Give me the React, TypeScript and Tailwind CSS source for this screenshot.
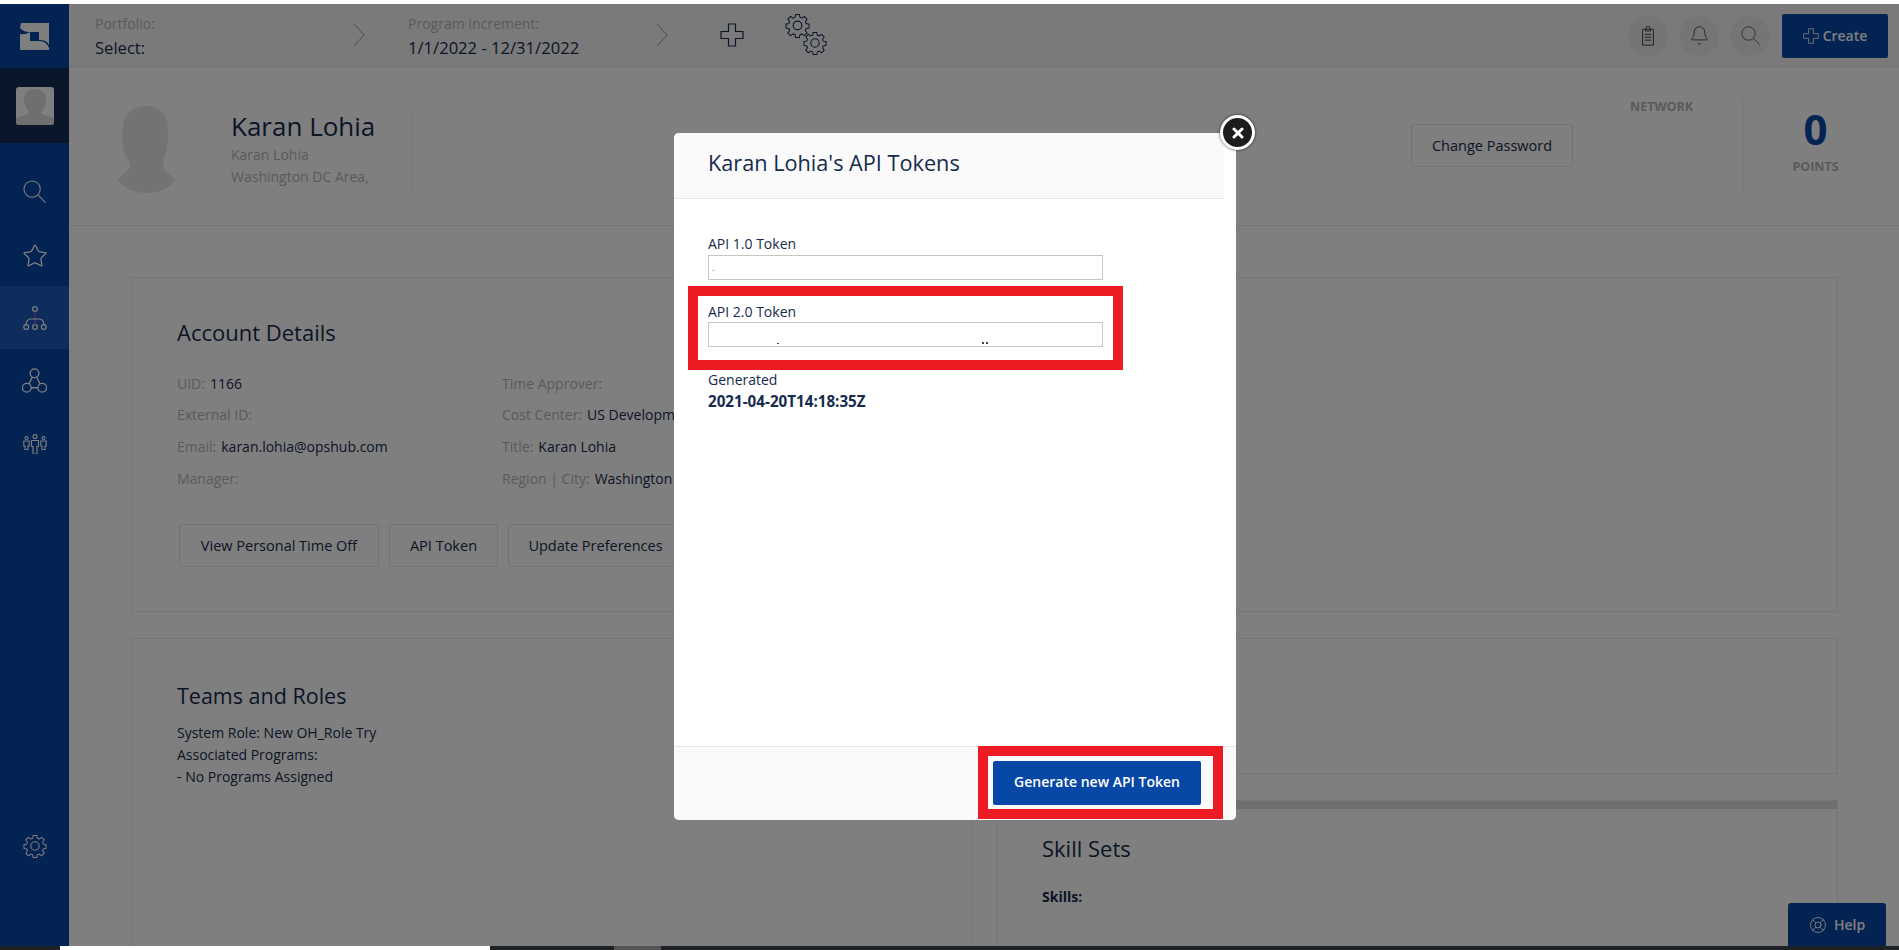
import React from 'react';
import { Star, Bell, LifeBuoy } from 'lucide-react';

function SearchIcon({ className }: { className?: string }) {
  return (
    <svg viewBox="0 0 24 24" fill="none" stroke="currentColor" strokeWidth="1.1" className={className}>
      <circle cx="9.5" cy="9.5" r="8.5" />
      <path d="M15.6 15.6 23.5 23.5" />
    </svg>
  );
}

function GearIcon({ className }: { className?: string }) {
  return (
    <svg viewBox="0 0 24 24" fill="none" stroke="currentColor" strokeWidth="1.1" className={className}>
      <circle cx="12" cy="12" r="4.2" />
      <path d="M10 1h4l.6 3.1 2 .8 2.6-1.8 2.8 2.8-1.8 2.6.8 2 3 .6v4l-3 .6-.8 2 1.8 2.6-2.8 2.8-2.6-1.8-2 .8-.6 3h-4l-.6-3-2-.8-2.6 1.8-2.8-2.8 1.8-2.6-.8-2-3-.6v-4l3-.6.8-2L2 5.9l2.8-2.8 2.6 1.8 2-.8z" transform="translate(12 12) scale(.92) translate(-12 -12.5)" />
    </svg>
  );
}

function PlusOutline({ className }: { className?: string }) {
  return (
    <svg viewBox="0 0 24 24" fill="none" stroke="currentColor" strokeWidth="1.2" className={className}>
      <path d="M8.5 1h7v7.5H23v7h-7.5V23h-7v-7.5H1v-7h7.5z" />
    </svg>
  );
}

function Chevron() {
  return (
    <svg viewBox="0 0 12 24" fill="none" stroke="#9a9a9a" strokeWidth="1" className="w-[12px] h-[24px] shrink-0">
      <path d="M1 1l10 11L1 23" />
    </svg>
  );
}

function Hierarchy({ className }: { className?: string }) {
  return (
    <svg viewBox="0 0 24 24" fill="none" stroke="currentColor" strokeWidth="1.2" className={className}>
      <circle cx="12" cy="3" r="2.4" />
      <circle cx="3.2" cy="21" r="2.4" />
      <circle cx="12" cy="21" r="2.4" />
      <circle cx="20.8" cy="21" r="2.4" />
      <path d="M12 5.4v13.2" stroke="#c050e0" />
      <path d="M3.2 18.6c0-4 2-5.6 5-5.6h7.600c3 0 5 1.600 5 5.600" />
    </svg>
  );
}

function Triad({ className }: { className?: string }) {
  return (
    <svg viewBox="0 0 24 24" fill="none" stroke="currentColor" strokeWidth="1.3" className={className}>
      <circle cx="12" cy="5" r="4.200" />
      <circle cx="4.600" cy="19" r="4.200" />
      <circle cx="19.400" cy="19" r="4.200" />
      <path d="M9.900 8.700 6.700 15.300M14.100 8.700l3.200 6.600M8.800 19h6.400" />
    </svg>
  );
}

function People({ className }: { className?: string }) {
  return (
    <svg viewBox="0 0 24 20" fill="none" stroke="currentColor" strokeWidth="1.100" className={className}>
      <circle cx="3.500" cy="4" r="1.500" />
      <circle cx="12" cy="2.500" r="2" />
      <circle cx="20.500" cy="4" r="1.500" />
      <path d="M.8 7h5.400v5H5v3.500H2V12H.8zM8.500 6.500h7v6H14V20h-4v-7.500H8.500zM17.800 7h5.400v5H22v3.500h-3V12h-1.200z" />
    </svg>
  );
}

function Silhouette({ className }: { className?: string }) {
  return (
    <svg viewBox="0 0 57 87" className={className}>
      <path d="M28 0c13 0 22 8 22 22 0 6 0 17-2 24-1 4-3 8-3 14 0 4 6 7 12 14-5 8-16 13-29 13C16 87 6 82 0 74c5-7 11-9 12-14 0-5-4-8-6-14-2-7-2-17-1-25C6 8 15 0 28 0z" fill="currentColor" />
    </svg>
  );
}

function AvatarThumb({ className }: { className?: string }) {
  return (
    <svg viewBox="0 0 38 38" className={className}>
      <path d="M19 2c6 0 11 4 11 11 0 5-2 9-5 12 0 2 3 3 13 6v7H0v-7c10-3 13-4 13-6-3-3-5-7-5-12C8 6 13 2 19 2z" fill="currentColor" />
    </svg>
  );
}

function Logo() {
  return (
    <svg viewBox="0 0 29 27" className="w-[29px] h-[27px]">
      <path d="M1 0h28v22l-2-3a12 12 0 0 0-8-2V9H9a12 12 0 0 1-9-4z" fill="#ffffff" />
      <path d="M0 11a14 14 0 0 0 10-2v9h9a10 10 0 0 1 10 7v2H0z" fill="#ffffff" />
    </svg>
  );
}

const navBtn = 'h-[43px] flex items-center justify-center border border-[#e6e6e6] rounded-[2px] text-[14.5px] font-medium text-[#172b4d] whitespace-nowrap';

function Field({ label, value }: { label: string; value?: string }) {
  return (
    <div className="flex gap-[5px] h-[20px] items-center text-[14px] whitespace-nowrap">
      <span className="text-[#b5b5b5]">{label}</span>
      {value && <span className="text-[#172b4d]">{value}</span>}
    </div>
  );
}

export default function App() {
  return (
    <div className="h-[950px] w-full flex flex-col overflow-hidden bg-white text-[#172b4d] font-['Open_Sans','Liberation_Sans',sans-serif]">
      <div className="h-[4px] bg-white shrink-0" />

      <div className="relative h-[942px] flex shrink-0 overflow-hidden">
        {/* Sidebar */}
        <aside className="w-[69px] shrink-0 bg-[#0747a6] flex flex-col text-white">
          <div className="h-[64px] flex items-center justify-center"><Logo /></div>
          <div className="h-[75px] bg-[#142c53] flex items-center justify-center">
            <div className="w-[38px] h-[38px] rounded-[3px] bg-white overflow-hidden text-[#dedede]">
              <AvatarThumb className="w-[38px] h-[38px]" />
            </div>
          </div>
          <div className="h-[80px] pt-[37px] flex justify-center"><SearchIcon className="w-[23px] h-[23px]" /></div>
          <div className="h-[63px] pt-[2px] flex items-center justify-center"><Star strokeWidth={1.2} className="w-[26px] h-[26px]" /></div>
          <div className="h-[63px] bg-[#1c5bb8] flex items-center justify-center"><Hierarchy className="w-[24px] h-[24px]" /></div>
          <div className="h-[63px] flex items-center justify-center"><Triad className="w-[25px] h-[25px]" /></div>
          <div className="h-[63px] flex items-center justify-center"><People className="w-[24px] h-[20px]" /></div>
          <div className="mt-[359px] flex justify-center"><GearIcon className="w-[24px] h-[24px]" /></div>
        </aside>

        {/* Main column */}
        <main className="flex-1 flex flex-col min-w-0">
          <header className="h-[64px] shrink-0 bg-[#f5f5f5] border-b border-[#ebebeb] flex items-center pl-[26px] pr-[11px]">
            <div className="w-[258px] mt-[3px]">
              <div className="text-[14px] leading-[20px] text-[#b5b5b5]">Portfolio:</div>
              <div className="text-[16.6px] leading-[24px] mt-[2px] font-medium">Select:</div>
            </div>
            <div className="-mt-[2px]"><Chevron /></div>
            <div className="w-[248px] ml-[43px] mt-[3px]">
              <div className="text-[14px] leading-[20px] text-[#b5b5b5]">Program Increment:</div>
              <div className="text-[16.6px] leading-[24px] mt-[2px] font-medium whitespace-nowrap">1/1/2022 - 12/31/2022</div>
            </div>
            <div className="-mt-[2px]"><Chevron /></div>
            <PlusOutline className="w-[24px] h-[24px] ml-[52px] -mt-[1px]" />
            <div className="ml-[41px] relative w-[42px] h-[42px] -mt-[4px]">
              <GearIcon className="w-[25px] h-[25px] absolute left-0 top-0" />
              <GearIcon className="w-[24px] h-[24px] absolute right-0 bottom-0" />
            </div>
            <div className="ml-auto flex items-center">
              <div className="w-[40px] h-[40px] rounded-full bg-[#ebebeb] flex items-center justify-center text-[#444]">
                <svg viewBox="0 0 16 24" fill="none" stroke="currentColor" strokeWidth="1.2" className="w-[14px] h-[20px]">
                  <path d="M1.500 4h13v19h-13zM5 4l1-1.500V1h4v1.500L11 4v2H5zM4 10h8M4 13.500h8M4 17h8" />
                </svg>
              </div>
              <div className="w-[40px] h-[40px] ml-[11px] rounded-full bg-[#ebebeb] flex items-center justify-center text-[#444]">
                <Bell strokeWidth={1} className="w-[21px] h-[21px]" />
              </div>
              <div className="w-[40px] h-[40px] ml-[11px] rounded-full bg-[#ebebeb] flex items-center justify-center text-[#555]">
                <SearchIcon className="w-[19px] h-[19px]" />
              </div>
              <div className="w-[106px] h-[44px] ml-[12px] rounded-[2px] bg-[#0747a6] text-white flex items-center justify-center gap-[4px] text-[14px] font-semibold">
                <PlusOutline className="w-[16px] h-[16px]" />
                Create
              </div>
            </div>
          </header>

          {/* Profile strip */}
          <section className="h-[158px] shrink-0 border-b border-[#ebebeb] flex items-start">
            <div className="text-[#e6e6e6] ml-[49px] mt-[38px]"><Silhouette className="w-[57px] h-[87px]" /></div>
            <div className="ml-[56px] mt-[41px] w-[181px] h-[82px] border-r border-[#ebebeb]">
              <div className="text-[26px] leading-[34px]">Karan Lohia</div>
              <div className="text-[14px] leading-[22px] text-[#b5b5b5] mt-[1px]">Karan Lohia</div>
              <div className="text-[14px] leading-[22px] text-[#b5b5b5]">Washington DC Area,</div>
            </div>
            <div className={`${navBtn} ml-[999px] mt-[56px] w-[162px]`}>Change Password</div>
            <div className="ml-[57px] mt-[30px] text-[12.5px] leading-[18px] font-bold text-[#b5b5b5]">NETWORK</div>
            <div className="ml-[49px] mt-[31px] w-[147px] h-[94px] border-l border-[#ebebeb] flex flex-col items-center pr-[1px]">
              <div className="text-[42px] leading-[58px] mt-[1px] font-bold text-[#0747a6]">0</div>
              <div className="text-[12.5px] leading-[18px] font-bold text-[#b5b5b5]">POINTS</div>
            </div>
          </section>

          {/* Cards */}
          <div className="pl-[62px] pr-[61px] pt-[51px] flex flex-col gap-[26px]">
            <section className="h-[335px] border border-[#ebebeb] pl-[45px] pt-[41px]">
              <h2 className="text-[22px] leading-[27px] font-medium">Account Details</h2>
              <div className="mt-[27px] flex">
                <div className="w-[325px] flex flex-col gap-[11.700px]">
                  <Field label="UID:" value="1166" />
                  <Field label="External ID:" />
                  <Field label="Email:" value="karan.lohia@opshub.com" />
                  <Field label="Manager:" />
                </div>
                <div className="flex flex-col gap-[11.700px]">
                  <Field label="Time Approver:" />
                  <Field label="Cost Center:" value="US Development" />
                  <Field label="Title:" value="Karan Lohia" />
                  <Field label="Region | City:" value="Washington DC Area" />
                </div>
              </div>
              <div className="mt-[36px] ml-[2px] flex gap-[10px]">
                <div className={`${navBtn} w-[200px]`}>View Personal Time Off</div>
                <div className={`${navBtn} w-[109px]`}>API Token</div>
                <div className={`${navBtn} w-[175px]`}>Update Preferences</div>
              </div>
            </section>

            <div className="flex gap-[25px]">
              <section className="w-[841px] h-[320px] border border-[#ebebeb] pl-[45px] pt-[43px]">
                <h2 className="text-[21.5px] leading-[27px] font-medium">Teams and Roles</h2>
                <div className="mt-[13px] text-[14px] leading-[22px]">
                  <div>System Role: New OH_Role Try</div>
                  <div>Associated Programs:</div>
                  <div>- No Programs Assigned</div>
                </div>
              </section>
              <div className="flex-1 flex flex-col gap-[26px]">
                <section className="h-[136px] border border-[#ebebeb]" />
                <section className="h-[160px] border border-[#ebebeb]">
                  <div className="h-[8px] bg-[#dedede]" />
                  <div className="pl-[44px] pt-[26px]">
                    <h2 className="text-[22px] leading-[27px] font-medium">Skill Sets</h2>
                    <div className="mt-[24px] text-[14px] font-bold">Skills:</div>
                  </div>
                </section>
              </div>
            </div>
          </div>
        </main>

        {/* Help tab */}
        <div className="absolute right-[13px] bottom-0 w-[98px] h-[43px] rounded-t-[3px] bg-[#0747a6] text-white flex items-center justify-center gap-[7px] text-[14px] font-semibold">
          <LifeBuoy strokeWidth={1.2} className="w-[18px] h-[18px]" />
          Help
        </div>

        {/* Backdrop */}
        <div className="absolute inset-0 bg-black/50" />

        {/* Modal */}
        <div className="absolute left-[674px] top-[129px] w-[562px] h-[687px] bg-white rounded-[5px] flex flex-col">
          <div className="w-[550px] h-[66px] shrink-0 bg-[#fafafa] border-b border-[#e6e6e6] rounded-tl-[5px] pl-[34px] flex items-center">
            <h3 className="text-[21.7px] font-medium -mt-[4px]">Karan Lohia's API Tokens</h3>
          </div>

          <div className="flex-1 pt-[35px] pl-[34px]">
            <div className="text-[14px] leading-[20px]">API 1.0 Token</div>
            <div className="w-[395px] h-[25px] mt-[1px] border border-[#c6c6c6] flex items-center pl-[3px] text-[9px] text-[#a05030]">.</div>

            <div className="w-[435px] h-[84px] -ml-[20px] mt-[6px] border-[10px] border-[#ed1c24] pl-[10px] pt-[6px]">
              <div className="text-[14px] leading-[20px]">API 2.0 Token</div>
              <div className="relative w-[395px] h-[25px] border border-[#c6c6c6]">
                <span className="absolute left-[68px] bottom-[2px] w-[2px] h-[1px] bg-[#444]" />
                <span className="absolute left-[273px] bottom-[2px] w-[2px] h-[2px] bg-[#444]" />
                <span className="absolute left-[277px] bottom-[2px] w-[2px] h-[2px] bg-[#444]" />
              </div>
            </div>

            <div className="text-[14px] leading-[20px]">Generated</div>
            <div className="text-[15.2px] leading-[20px] mt-[1px] font-bold">2021-04-20T14:18:35Z</div>
          </div>

          <div className="h-[74px] shrink-0 bg-[#fafafa] border-t border-[#e6e6e6] rounded-b-[5px] flex justify-end pr-[13px]">
            <div className="w-[245px] h-[73px] -mt-px border-[10px] border-[#ed1c24] pl-[5px] pt-[5px]">
              <button className="w-[208px] h-[44px] pb-[4px] bg-[#0747a6] text-white text-[14px] font-semibold rounded-[2px]">Generate new API Token</button>
            </div>
          </div>

          {/* Close button */}
          <button className="absolute -right-[19px] -top-[18px] w-[35px] h-[35px] rounded-full bg-[#1d1d1d] border-[3px] border-white shadow-[0_0_3px_rgba(0,0,0,0.7)] flex items-center justify-center">
            <svg viewBox="0 0 12 12" className="w-[12px] h-[12px]" stroke="white" strokeWidth="3" strokeLinecap="round">
              <path d="M2 2l8 8M10 2l-8 8" />
            </svg>
          </button>
        </div>
      </div>

      {/* Strip of the window below the page */}
      <div className="h-[4px] shrink-0 bg-[#1e2226] flex">
        <div className="ml-[60px] w-[430px] bg-white" />
        <div className="ml-[124px] w-[47px] bg-[#555]" />
      </div>
    </div>
  );
}
